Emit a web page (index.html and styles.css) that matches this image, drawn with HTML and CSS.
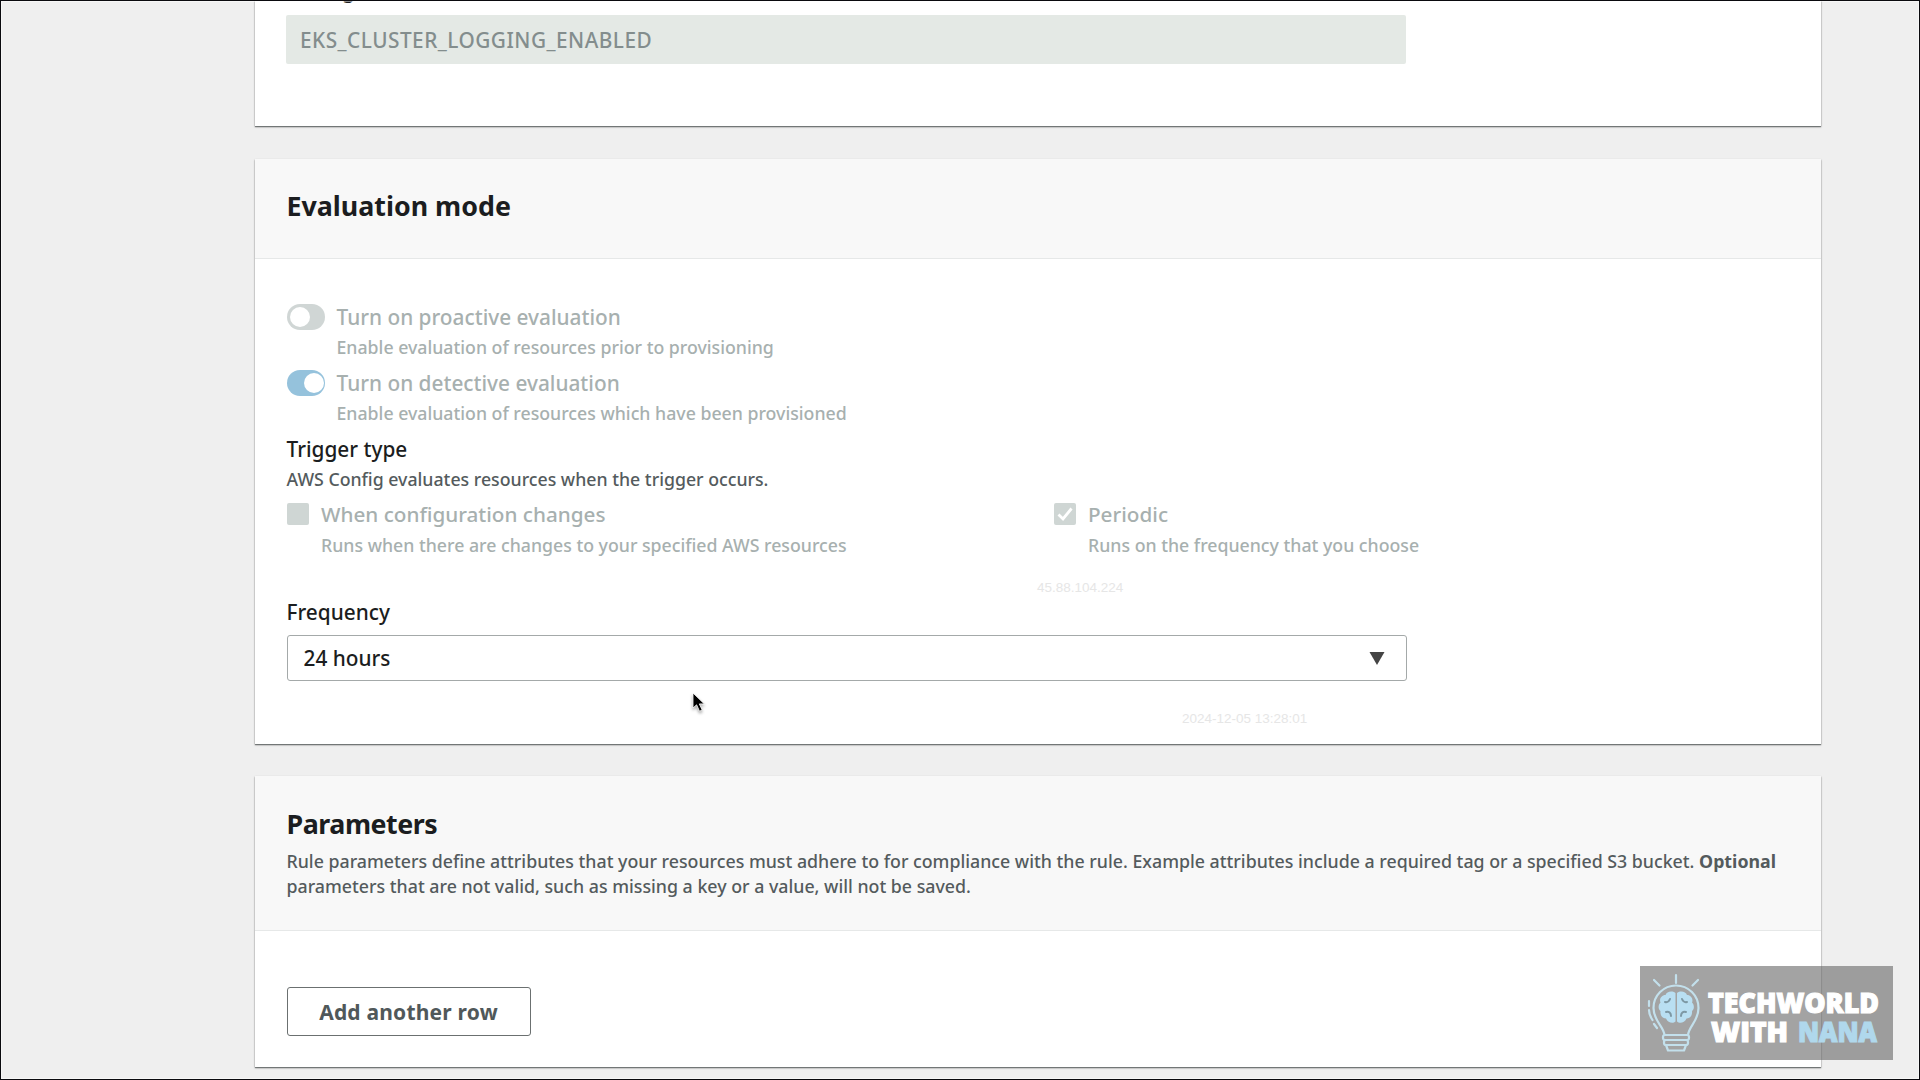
FILE: index.html
```html
<!DOCTYPE html>
<html lang="en">
<head>
<meta charset="utf-8">
<title>AWS Config - Edit rule</title>
<link rel="stylesheet" href="styles.css">
</head>
<body>
<main class="page">
  <section class="card card-details">
    <label class="label label-name">Managed rule name</label>
    <div class="input-disabled">EKS_CLUSTER_LOGGING_ENABLED</div>
  </section>

  <section class="card card-evaluation">
    <header class="card-header header-single">
      <h2 class="title">Evaluation mode</h2>
    </header>
    <div class="card-body">
      <div class="toggle-row">
        <span class="toggle"></span>
        <div>
          <div class="label muted">Turn on proactive evaluation</div>
          <div class="desc muted toggle-desc">Enable evaluation of resources prior to provisioning</div>
        </div>
      </div>
      <div class="toggle-row">
        <span class="toggle toggle-on"></span>
        <div>
          <div class="label muted">Turn on detective evaluation</div>
          <div class="desc muted toggle-desc">Enable evaluation of resources which have been provisioned</div>
        </div>
      </div>
      <div class="label trigger-label">Trigger type</div>
      <div class="desc trigger-desc">AWS Config evaluates resources when the trigger occurs.</div>
      <div class="options">
        <div class="option">
          <span class="checkbox"></span>
          <div>
            <div class="label muted option-label">When configuration changes</div>
            <div class="desc muted option-desc">Runs when there are changes to your specified AWS resources</div>
          </div>
        </div>
        <div class="option">
          <span class="checkbox">
            <svg viewBox="0 0 22 22" width="22" height="22"><path d="M4.500 11.500 9 16 17.500 5.500" fill="none" stroke="#fff" stroke-width="2.800"/></svg>
          </span>
          <div>
            <div class="label muted option-label">Periodic</div>
            <div class="desc muted option-desc">Runs on the frequency that you choose</div>
          </div>
        </div>
      </div>
      <div class="label frequency-label">Frequency</div>
      <div class="select">
        <span>24 hours</span>
        <svg viewBox="0 0 16 13" width="16" height="13"><path d="M0.500 0h15L8 13z" fill="#444"/></svg>
      </div>
    </div>
  </section>

  <section class="card card-parameters">
    <header class="card-header header-parameters">
      <h2 class="title title-parameters">Parameters</h2>
      <p class="desc header-desc">Rule parameters define attributes that your resources must adhere to for compliance with the rule. Example attributes include a required tag or a specified S3 bucket. <b>Optional</b><br>parameters that are not valid, such as missing a key or a value, will not be saved.</p>
    </header>
    <div class="card-body parameters-body">
      <button class="button">Add another row</button>
    </div>
  </section>
</main>

<div class="stamp stamp-ip">45.88.104.224</div>
<div class="stamp stamp-date">2024-12-05 13:28:01</div>

<svg class="cursor" viewBox="0 0 16 22" width="16" height="22"><path d="M1 1v15l3.600-3.200 2.900 6.400 2.700-1.200-2.900-6.100h5z" fill="#000" stroke="#fff" stroke-width="0.800"/></svg>

<svg class="logo" viewBox="0 0 253 94" width="253" height="94">
  <rect width="253" height="94" fill="#666" fill-opacity="0.600"/>
  <g fill="none" stroke="#c3e0ec" stroke-width="2.200" stroke-linecap="round" stroke-linejoin="round">
    <path d="M36 9v8M14 14l5.500 5.500M58 14l-5.500 5.500"/>
    <path d="M24.500 69c-1-9-11-14-11-27a22.500 22.500 0 0 1 45 0c0 13-9.500 18-10.500 27z"/>
    <path d="M9 35v5M9 44c0 4 1.500 7 3.500 10M14 58l3 4"/>
    <rect x="23" y="69" width="26" height="5" rx="2"/>
    <rect x="24" y="74" width="24" height="5" rx="2"/>
    <path d="M26 79h20l-2 5.500H28z"/>
  </g>
  <path d="M35.500 27c-4-3-9-1-10 2-4 0-6.500 4-5 7.500-2.500 2.500-2.500 6.500 0 8.500-.500 4 1.500 7.500 5.500 7.500 2 4.500 7 5.500 9.500 3z" fill="#b9dff2"/>
  <path d="M37 27c4-3 9-1 10 2 4 0 6.500 4 5 7.500 2.500 2.500 2.500 6.500 0 8.500.500 4-1.500 7.500-5.500 7.500-2 4.500-7 5.500-9.500 3z" fill="#b9dff2"/>
  <path d="M25 36c2 .500 4-.500 5-3M47 36c-2 .500-4-.500-5-3M26 46c3-1 5 1 5 4M46 46c-3-1-5 1-5 4" fill="none" stroke="#7d98a4" stroke-width="2" stroke-linecap="round"/>
  <text class="logo-text" x="68" y="47" textLength="171" lengthAdjust="spacingAndGlyphs">TECHWORLD</text>
  <text class="logo-text" x="71" y="75.500" textLength="77" lengthAdjust="spacingAndGlyphs">WITH</text>
  <text class="logo-text logo-accent" x="158" y="75.500" textLength="79" lengthAdjust="spacingAndGlyphs">NANA</text>
</svg>
<div class="frame"></div>
</body>
</html>
```
FILE: styles.css
```css
* {
  box-sizing: border-box;
}

body {
  margin: 0;
  width: 1920px;
  height: 1080px;
  overflow: hidden;
  position: relative;
  background: #efefef;
  color: #1b1d20;
  font-family: "Noto Sans", "Open Sans", sans-serif;
  font-weight: 500;
}

/* Window outline drawn above the content */
.frame {
  position: absolute;
  inset: 0;
  border: 1px solid #0a0a0e;
  box-shadow: inset 0 0 0 1px rgba(255, 255, 255, 0.5);
}

.page {
  height: 1080px;
  padding: 0 99px 0 255px;
  display: flex;
  flex-direction: column;
  gap: 32px;
  overflow: hidden;
}

.card {
  flex: none;
  background: #fff;
  box-shadow: 0 1px 1px 0 rgba(0, 10, 10, 0.4), 0 1px 2px 0 rgba(0, 0, 0, 0.3);
}

.card-details {
  height: 126px;
  margin-bottom: 1px;
  padding: 0 31px;
}

.card-evaluation {
  height: 585px;
}

.card-parameters {
  height: 291px;
}

.card-header {
  background: #f8f8f8;
  border-bottom: 1px solid #e6e8e8;
  padding: 0 31px 0 31.5px;
}

.header-single {
  height: 100px;
  padding-top: 29px;
}

.header-parameters {
  height: 155px;
  padding-top: 30px;
}

.title {
  margin: 0;
  font-size: 26.8px;
  line-height: 36px;
  font-weight: 700;
}

.title-parameters {
  letter-spacing: -0.45px;
}

.label {
  font-size: 20.8px;
  line-height: 28px;
  white-space: nowrap;
}

.label-name {
  display: block;
  margin-top: -24px;
}

.desc {
  font-size: 17.73px;
  line-height: 24px;
  color: #545b5d;
  white-space: nowrap;
}

.muted {
  color: #a7b0af;
}

.input-disabled {
  width: 1120px;
  height: 49px;
  margin-top: 11px;
  padding-left: 14px;
  border-radius: 2px;
  background: #e4e9e5;
  color: #838d8d;
  font-size: 20.8px;
  line-height: 50px;
  letter-spacing: 0.48px;
}

.card-body {
  padding: 44px 31px 0 31.5px;
}

.toggle-row {
  display: grid;
  grid-template-columns: 50px auto;
  height: 66px;
}

.toggle-desc {
  margin-top: 4px;
}

.toggle {
  display: flex;
  align-items: center;
  width: 38px;
  height: 26px;
  margin-top: 1px;
  padding: 0 3px;
  border-radius: 13px;
  background: #d0d6d5;
}

.toggle::before {
  content: "";
  width: 20px;
  height: 20px;
  border-radius: 50%;
  background: #fff;
}

.toggle-on {
  justify-content: flex-end;
  padding: 0 1px;
  background: #95c2dc;
}

.trigger-desc {
  margin-top: 4px;
}

.options {
  display: grid;
  grid-template-columns: 767px auto;
  margin-top: 9px;
}

.option {
  display: grid;
  grid-template-columns: 34.5px auto;
}

.option-label {
  font-size: 20.7px;
}

.option-desc {
  margin-top: 5px;
}

.checkbox {
  width: 22px;
  height: 22px;
  margin-top: 3px;
  border-radius: 2px;
  background: #cfd6d4;
}

.checkbox svg {
  display: block;
}

.frequency-label {
  margin-top: 41px;
}

.select {
  display: flex;
  align-items: center;
  justify-content: space-between;
  width: 1120px;
  height: 46px;
  margin-top: 9px;
  padding: 0 21px 0 16px;
  border: 1.5px solid #a4a9a9;
  border-radius: 3px;
  font-size: 20.8px;
}

.header-desc {
  margin: 7px 0 0;
  line-height: 25.3px;
  font-size: 17.77px;
}

.parameters-body {
  padding-top: 56px;
}

.button {
  display: block;
  width: 244px;
  height: 49px;
  padding: 0;
  border: 1.5px solid #6b7070;
  border-radius: 3px;
  background: #fff;
  color: #50585a;
  font: 700 21px "Noto Sans", "Open Sans", sans-serif;
  letter-spacing: 0.2px;
}

/* Faint session marks laid over the page */
.stamp {
  position: absolute;
  font: 13.5px/16px "Liberation Sans", Arial, sans-serif;
  color: #e6e6e6;
  white-space: nowrap;
}

.stamp-ip {
  left: 1037px;
  top: 580px;
}

.stamp-date {
  left: 1182px;
  top: 711px;
}

.cursor {
  position: absolute;
  left: 692px;
  top: 692px;
  filter: drop-shadow(0 2px 1.5px rgba(0, 0, 0, 0.35));
}

.logo {
  position: absolute;
  left: 1640px;
  top: 966px;
}

.logo-text {
  font: 800 28px "Open Sans", sans-serif;
  fill: #fff;
  stroke: #fff;
  stroke-width: 1.2px;
}

.logo-accent {
  fill: #b0d8ec;
  stroke: #b0d8ec;
}
```
